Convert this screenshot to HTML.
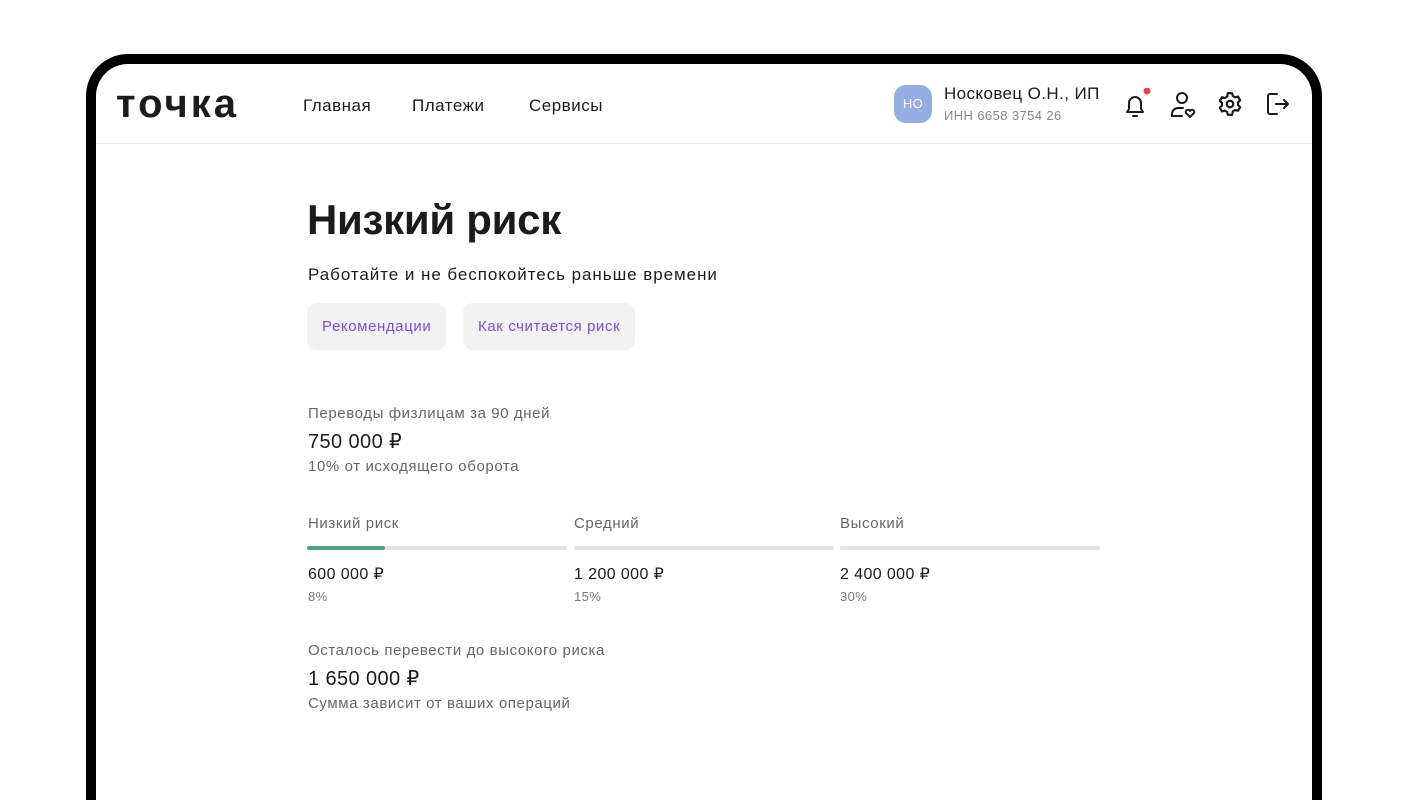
<!DOCTYPE html>
<html><head><meta charset="utf-8"><style>
*{margin:0;padding:0;box-sizing:border-box}
html,body{width:1408px;height:800px;overflow:hidden}
body{background:#fff;position:relative;font-family:"Liberation Sans","DejaVu Sans",sans-serif;color:#1b1b1b;letter-spacing:0.4px}
.frame{position:absolute;left:86px;top:54px;width:1236px;height:746px;background:#000;border-radius:42px 42px 0 0}
.inner{position:absolute;left:96px;top:64px;width:1216px;height:736px;background:#fff;border-radius:32px 32px 0 0}
.hdr{position:absolute;left:96px;top:143px;width:1216px;height:1px;background:#e6e6e6}
.a{position:absolute;white-space:nowrap}
.nav{font-size:17px;top:96px;color:#1b1b1b;letter-spacing:0.5px}
.chip{position:absolute;top:303px;height:47px;background:#f2f2f2;border-radius:10px;color:#7b4ee0;font-size:15px;line-height:48px;padding:0 15px;letter-spacing:0.6px}
.bar{position:absolute;top:546px;height:4px;width:260px;background:#e3e3e3;border-radius:2px}
.g{color:#666;font-size:15px;letter-spacing:0.6px}
.s{color:#777;font-size:13px}
</style></head><body>
<div class="frame"></div><div class="inner"></div><div class="hdr"></div>
<div class="a" style="left:116px;top:79px;font-size:40px;font-weight:bold;letter-spacing:3px;line-height:50px">точка</div>
<div class="a nav" style="left:303px">Главная</div>
<div class="a nav" style="left:412px">Платежи</div>
<div class="a nav" style="left:529px">Сервисы</div>
<div class="a" style="left:894px;top:85px;width:38px;height:38px;border-radius:12px;background:#94aee3;color:#fff;font-size:13px;line-height:38px;text-align:center">НО</div>
<div class="a" style="left:944px;top:84px;font-size:17px">Носковец О.Н., ИП</div>
<div class="a" style="left:944px;top:108px;font-size:13px;color:#888">ИНН 6658 3754 26</div>
<svg class="a" style="left:1122px;top:88px" width="30" height="32" viewBox="0 0 30 32" fill="none" stroke="#1b1b1b" stroke-width="2" stroke-linecap="round" stroke-linejoin="round"><path d="M5 24h16l-2-3v-6a6 6 0 0 0-12 0v6z"/><path d="M11 28h4"/><circle cx="25" cy="3" r="3.5" fill="#e04848" stroke="none"/></svg>
<svg class="a" style="left:1170px;top:90px" width="28" height="30" viewBox="0 0 28 30" fill="none" stroke="#1b1b1b" stroke-width="2" stroke-linecap="round" stroke-linejoin="round"><circle cx="12" cy="8" r="5"/><path d="M2 26v-2a6 6 0 0 1 6-6h5"/><path d="M2 26h10"/><path d="M20 27l-4-4a2 2 0 0 1 4-2a2 2 0 0 1 4 2z"/></svg>
<svg class="a" style="left:1217px;top:91px" width="26" height="26" viewBox="0 0 24 24" fill="none" stroke="#1b1b1b" stroke-width="2" stroke-linejoin="round"><circle cx="12" cy="12" r="3"/><path d="M10 2h4l.6 2.6 2.3 1.3 2.5-.8 2 3.5-2 1.8v2.6l2 1.8-2 3.5-2.5-.8-2.3 1.3L14 22h-4l-.6-2.6-2.3-1.3-2.5.8-2-3.5 2-1.8v-2.6l-2-1.8 2-3.5 2.5.8 2.3-1.3z"/></svg>
<svg class="a" style="left:1266px;top:92px" width="26" height="24" viewBox="0 0 26 24" fill="none" stroke="#1b1b1b" stroke-width="2" stroke-linecap="round" stroke-linejoin="round"><path d="M11 2H4a2 2 0 0 0-2 2v16a2 2 0 0 0 2 2h7"/><path d="M10 12h12M18 8l4 4-4 4"/></svg>
<div class="a" style="left:307px;top:196px;font-size:42px;font-weight:bold;letter-spacing:-0.3px">Низкий риск</div>
<div class="a" style="left:308px;top:265px;font-size:17px;letter-spacing:0.95px">Работайте и не беспокойтесь раньше времени</div>
<div class="chip" style="left:307px">Рекомендации</div>
<div class="chip" style="left:463px">Как считается риск</div>
<div class="a g" style="left:308px;top:405px">Переводы физлицам за 90 дней</div>
<div class="a" style="left:308px;top:429px;font-size:20px">750 000 ₽</div>
<div class="a g" style="left:308px;top:458px">10% от исходящего оборота</div>
<div class="a g" style="left:308px;top:515px">Низкий риск</div>
<div class="a g" style="left:574px;top:515px">Средний</div>
<div class="a g" style="left:840px;top:515px">Высокий</div>
<div class="bar" style="left:307px"></div><div class="bar" style="left:307px;width:78px;background:#4aa58a"></div>
<div class="bar" style="left:574px"></div><div class="bar" style="left:840px"></div>
<div class="a" style="left:308px;top:564px;font-size:16px">600 000 ₽</div>
<div class="a" style="left:574px;top:564px;font-size:16px">1 200 000 ₽</div>
<div class="a" style="left:840px;top:564px;font-size:16px">2 400 000 ₽</div>
<div class="a s" style="left:308px;top:589px">8%</div>
<div class="a s" style="left:574px;top:589px">15%</div>
<div class="a s" style="left:840px;top:589px">30%</div>
<div class="a g" style="left:308px;top:642px">Осталось перевести до высокого риска</div>
<div class="a" style="left:308px;top:666px;font-size:20px">1 650 000 ₽</div>
<div class="a g" style="left:308px;top:695px">Сумма зависит от ваших операций</div>
</body></html>
